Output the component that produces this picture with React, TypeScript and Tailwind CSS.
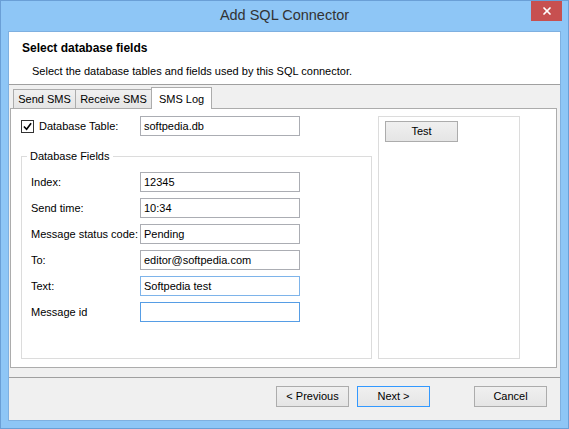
import { X } from 'lucide-react';

const font = { fontFamily: '"Liberation Sans", Arial, sans-serif' };

const fields = [
  { label: 'Index:', value: '12345', border: 'border-[#abadb3]' },
  { label: 'Send time:', value: '10:34', border: 'border-[#abadb3]' },
  { label: 'Message status code:', value: 'Pending', border: 'border-[#abadb3]' },
  { label: 'To:', value: 'editor@softpedia.com', border: 'border-[#abadb3]' },
  { label: 'Text:', value: 'Softpedia test', border: 'border-[#7eb4ea]' },
  { label: 'Message id', value: '', border: 'border-[#569de5]' },
];

function TextBox({ value, border }: { value: string; border: string }) {
  return (
    <div className={`w-[160px] h-[20px] bg-white border ${border} flex items-center px-[3px] text-[11px] text-black`}>
      {value}
    </div>
  );
}

function Button({ label, primary }: { label: string; primary?: boolean }) {
  return (
    <div
      className={`h-[21px] w-[73px] flex items-center justify-center border text-[11px] text-black bg-gradient-to-b from-[#f0f0f0] to-[#e5e5e5] ${
        primary ? 'border-[#3399ff]' : 'border-[#acacac]'
      }`}
    >
      {label}
    </div>
  );
}

export default function App() {
  return (
    <div style={font} className="w-[569px] h-[429px] bg-[#8ec6f6] border border-[#6a9fd6] flex flex-col">
      {/* title bar */}
      <div className="relative h-[30px] flex items-center justify-center shrink-0">
        <span className="text-[14.5px] text-[#333]">Add SQL Connector</span>
        <div className="absolute right-[6px] top-0 w-[31px] h-[20px] bg-[#c75050] flex items-center justify-center">
          <X className="w-[12px] h-[12px] text-white" strokeWidth={3.5} />
        </div>
      </div>

      {/* client area */}
      <div className="mx-[7px] mb-[7px] flex-1 flex flex-col border border-[#7fb0e0] bg-[#f0f0f0]">
        <div className="h-[53px] bg-white border-b border-[#a0a0a0] flex flex-col pl-[13px] pt-[9px] shrink-0">
          <div className="text-[12px] font-bold text-black leading-[14px]">Select database fields</div>
          <div className="text-[11px] text-black pl-[10px] mt-[10px] leading-[13px]">
            Select the database tables and fields used by this SQL connector.
          </div>
        </div>

        <div className="flex flex-col ml-[1px] mr-[3px] pt-[2px]">
          {/* tabs */}
          <div className="flex items-end h-[21px] pl-[3px] relative z-10">
            <div className="h-[19px] w-[63px] border border-b-0 border-[#acacac] bg-gradient-to-b from-[#f0f0f0] to-[#e5e5e5] flex items-center justify-center text-[11px] text-black">
              Send SMS
            </div>
            <div className="h-[19px] w-[76px] border border-l-0 border-b-0 border-[#acacac] bg-gradient-to-b from-[#f0f0f0] to-[#e5e5e5] flex items-center justify-center text-[11px] text-black">
              Receive SMS
            </div>
            <div className="h-[22px] w-[61px] -ml-[1px] -mb-[1px] border border-b-0 border-[#acacac] bg-white flex items-start pt-[3px] justify-center text-[11px] text-black">
              SMS Log
            </div>
          </div>

          {/* tab panel */}
          <div className="h-[260px] bg-white border border-[#acacac] flex pl-[10px] pt-[7px] pb-[8px] gap-[6px]">
            <div className="w-[351px] flex flex-col">
              <div className="flex items-center h-[20px]">
                <div className="w-[13px] h-[13px] border border-[#333] bg-white flex items-center justify-center">
                  <svg viewBox="0 0 10 10" className="w-[9px] h-[9px]">
                    <path d="M1 5 L4 8 L9 1.5" fill="none" stroke="#000" strokeWidth="1.8" />
                  </svg>
                </div>
                <span className="ml-[5px] text-[11px] text-black w-[101px]">Database Table:</span>
                <TextBox value="softpedia.db" border="border-[#abadb3]" />
              </div>

              <div className="relative mt-[20px] flex-1 border border-[#dcdcdc] pt-[15px] pl-[9px] flex flex-col gap-[6px]">
                <span className="absolute -top-[7px] left-[5px] bg-white px-[3px] text-[11px] text-black leading-[13px]">
                  Database Fields
                </span>
                {fields.map((f) => (
                  <div key={f.label} className="flex items-center">
                    <span className="w-[109px] text-[11px] text-black">{f.label}</span>
                    <TextBox value={f.value} border={f.border} />
                  </div>
                ))}
              </div>
            </div>

            <div className="w-[142px] border border-[#dcdcdc] pt-[4px] pl-[6px]">
              <Button label="Test" />
            </div>
          </div>
        </div>

        {/* footer */}
        <div className="mt-[9px] border-t border-[#a0a0a0] flex-1 flex items-start pt-[8px] pr-[13px] justify-end">
          <div className="flex gap-[8px]">
            <Button label="< Previous" />
            <Button label="Next >" primary />
          </div>
          <div className="ml-[44px]">
            <Button label="Cancel" />
          </div>
        </div>
      </div>
    </div>
  );
}
